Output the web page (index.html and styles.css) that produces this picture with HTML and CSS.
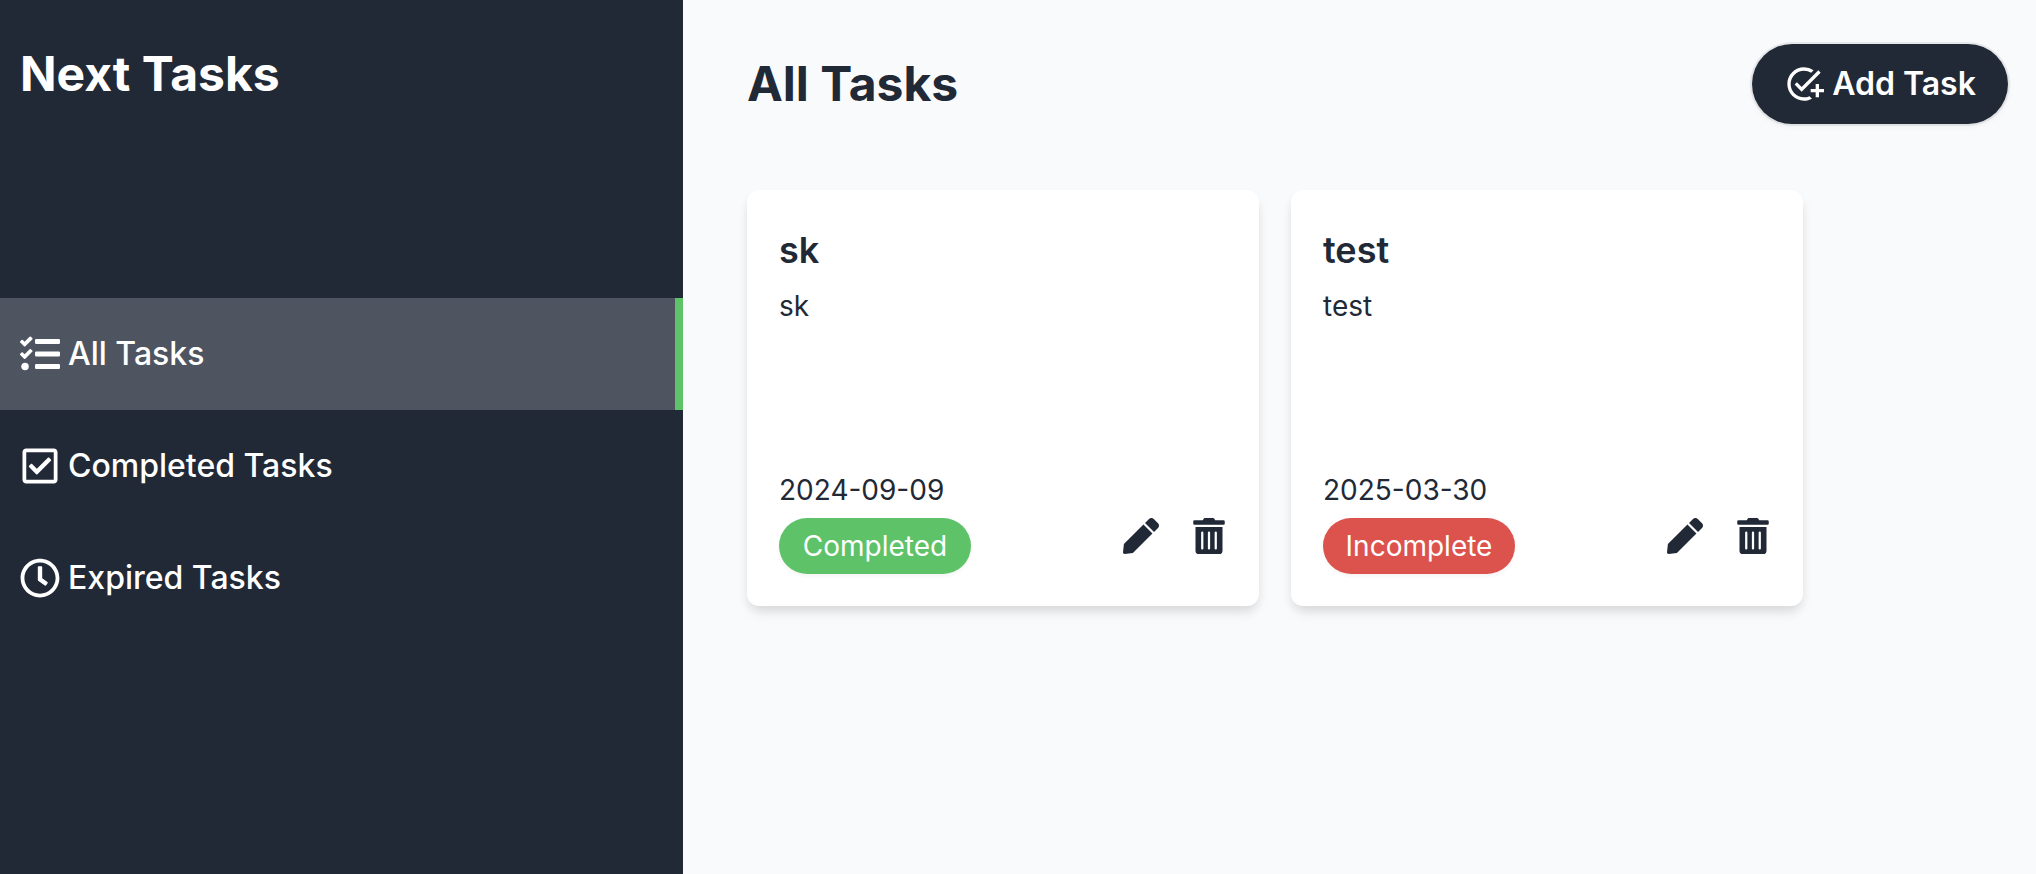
FILE: index.html
```html
<!DOCTYPE html>
<html lang="en">
<head>
<meta charset="utf-8">
<title>Next Tasks</title>
<link rel="stylesheet" href="styles.css">
</head>
<body>
<svg class="defs" aria-hidden="true">
  <symbol id="pen" viewBox="0 0 512 512"><path d="M290.74 93.24l128.02 128.02-277.99 277.99-114.14 12.6C11.35 513.54-1.56 500.62.14 485.34l12.7-114.22 277.9-277.88zm207.2-19.06l-60.11-60.11c-18.75-18.75-49.16-18.75-67.91 0l-56.55 56.55 128.02 128.02 56.55-56.55c18.75-18.76 18.75-49.16 0-67.91z"/></symbol>
  <symbol id="trash" viewBox="0 0 448 512"><path d="M32 464a48 48 0 0 0 48 48h288a48 48 0 0 0 48-48V128H32zm272-256a16 16 0 0 1 32 0v224a16 16 0 0 1-32 0zm-96 0a16 16 0 0 1 32 0v224a16 16 0 0 1-32 0zm-96 0a16 16 0 0 1 32 0v224a16 16 0 0 1-32 0zM432 32H312l-9.4-18.7A24 24 0 0 0 281.1 0H166.8a23.72 23.72 0 0 0-21.4 13.3L136 32H16A16 16 0 0 0 0 48v32a16 16 0 0 0 16 16h416a16 16 0 0 0 16-16V48a16 16 0 0 0-16-16z"/></symbol>
</svg>
<div class="app">
  <aside class="sidebar">
    <h1 class="brand">Next Tasks</h1>
    <nav class="nav">
      <a class="nav-item active">
        <svg class="nav-icon" viewBox="0 0 512 512"><path d="M139.61 35.5a12 12 0 0 0-17 0L58.93 98.81l-22.7-22.12a12 12 0 0 0-17 0L3.53 92.41a12 12 0 0 0 0 17l47.59 47.4a12.78 12.78 0 0 0 17.61 0l15.59-15.62L156.52 69a12.09 12.09 0 0 0 .09-17zm0 159.19a12 12 0 0 0-17 0l-63.68 63.72-22.7-22.1a12 12 0 0 0-17 0L3.53 252a12 12 0 0 0 0 17L51 316.5a12.77 12.77 0 0 0 17.6 0l15.7-15.69 72.2-72.22a12 12 0 0 0 .09-16.9zM64 368c-26.49 0-48.59 21.5-48.59 48S37.53 464 64 464a48 48 0 0 0 0-96zm432 16H208a16 16 0 0 0-16 16v32a16 16 0 0 0 16 16h288a16 16 0 0 0 16-16v-32a16 16 0 0 0-16-16zm0-320H208a16 16 0 0 0-16 16v32a16 16 0 0 0 16 16h288a16 16 0 0 0 16-16V80a16 16 0 0 0-16-16zm0 160H208a16 16 0 0 0-16 16v32a16 16 0 0 0 16 16h288a16 16 0 0 0 16-16v-32a16 16 0 0 0-16-16z"/></svg>
        <span>All Tasks</span>
      </a>
      <a class="nav-item">
        <svg class="nav-icon" viewBox="0 0 448 512"><path d="M400 32H48C21.49 32 0 53.49 0 80v352c0 26.51 21.49 48 48 48h352c26.51 0 48-21.49 48-48V80c0-26.51-21.49-48-48-48zm0 400H48V80h352v352zm-35.864-241.724L191.547 361.48c-4.705 4.667-12.303 4.637-16.97-.068l-90.781-91.516c-4.667-4.705-4.637-12.303.069-16.971l22.719-22.536c4.705-4.667 12.303-4.637 16.97.069l59.792 60.277 141.352-140.216c4.705-4.667 12.303-4.637 16.97.068l22.536 22.718c4.667 4.706 4.637 12.304-.068 16.971z"/></svg>
        <span>Completed Tasks</span>
      </a>
      <a class="nav-item">
        <svg class="nav-icon" viewBox="0 0 512 512"><path d="M256 8C119 8 8 119 8 256s111 248 248 248 248-111 248-248S393 8 256 8zm0 448c-110.5 0-200-89.5-200-200S145.5 56 256 56s200 89.5 200 200-89.5 200-200 200zm61.8-104.4l-84.9-61.7c-3.1-2.3-4.9-5.9-4.9-9.7V116c0-6.6 5.4-12 12-12h32c6.6 0 12 5.4 12 12v141.7l66.8 48.6c5.4 3.9 6.5 11.4 2.6 16.8L334.6 349c-3.9 5.3-11.4 6.5-16.8 2.6z"/></svg>
        <span>Expired Tasks</span>
      </a>
    </nav>
  </aside>
  <main class="main">
    <header class="header">
      <h2 class="heading">All Tasks</h2>
      <button class="add">
        <svg class="add-icon" viewBox="0 0 24 24"><path d="M22 5.18 10.59 16.6l-4.24-4.24 1.41-1.41 2.83 2.83 10-10L22 5.18zM12 20c-4.42 0-8-3.58-8-8s3.58-8 8-8c1.57 0 3.04.46 4.28 1.25l1.45-1.45A10.02 10.02 0 0 0 12 2C6.48 2 2 6.48 2 12s4.48 10 10 10c1.73 0 3.36-.44 4.78-1.22l-1.5-1.5c-1 .46-2.11.72-3.28.72zm7-5h-3v2h3v3h2v-3h3v-2h-3v-3h-2v3z"/></svg>
        <span>Add Task</span>
      </button>
    </header>
    <div class="cards">
      <article class="card">
        <div>
          <h3 class="card-title">sk</h3>
          <p class="text">sk</p>
        </div>
        <div>
          <p class="text">2024-09-09</p>
          <div class="row">
            <span class="badge done">Completed</span>
            <div class="actions">
              <svg class="pen"><use href="#pen"/></svg>
              <svg class="trash"><use href="#trash"/></svg>
            </div>
          </div>
        </div>
      </article>
      <article class="card">
        <div>
          <h3 class="card-title">test</h3>
          <p class="text">test</p>
        </div>
        <div>
          <p class="text">2025-03-30</p>
          <div class="row">
            <span class="badge todo">Incomplete</span>
            <div class="actions">
              <svg class="pen"><use href="#pen"/></svg>
              <svg class="trash"><use href="#trash"/></svg>
            </div>
          </div>
        </div>
      </article>
    </div>
  </main>
</div>
</body>
</html>
```
FILE: styles.css
```css
* { box-sizing: border-box; margin: 0; padding: 0; }
body { font-family: Inter, sans-serif; color: #222936; background: #f9fafc; }
svg { display: block; fill: currentColor; flex: none; }
.defs { display: none; }

.app { display: flex; height: 874px; overflow: hidden; }

.sidebar { width: 683px; background: #222936; color: #fff; }
.brand { height: 298px; padding: 42px 20px 0; font-size: 48px; line-height: 64px; font-weight: 700; }
.nav-item {
  display: flex; align-items: center; gap: 8px;
  height: 112px; padding-left: 20px;
  font-size: 32px; line-height: 48px; font-weight: 500;
}
.nav-item.active { background: #4e5561; border-right: 8px solid #5ec269; }
.nav-icon { width: 40px; height: 40px; }

.main { flex: 1; padding: 44px 28px 0 64px; }
.header { display: flex; align-items: center; justify-content: space-between; height: 80px; }
.heading { font-size: 48px; line-height: 64px; font-weight: 700; }
.add {
  display: flex; align-items: center; justify-content: center; gap: 8px;
  width: 256px; height: 80px; border: 0; border-radius: 40px;
  background: #222936; color: #fff;
  font: 600 32px/48px Inter, sans-serif;
  box-shadow: 0 0 0 2px rgba(34, 41, 54, .08), 0 2px 6px rgba(0, 0, 0, .06);
}
.add-icon { width: 40px; height: 40px; }

.cards { display: flex; gap: 32px; margin-top: 66px; }
.card {
  display: flex; flex-direction: column; justify-content: space-between;
  width: 512px; height: 416px; padding: 32px; border-radius: 12px;
  background: #fff;
  box-shadow: 0 8px 12px -2px rgba(0, 0, 0, .1), 0 4px 12px -2px rgba(0, 0, 0, .06);
}
.card-title { font-size: 36px; line-height: 56px; font-weight: 600; }
.text { font-size: 28px; line-height: 56px; }
.row { display: flex; justify-content: space-between; }
.badge {
  width: 192px; height: 56px; border-radius: 28px;
  color: #fff; font-size: 28px; line-height: 56px; text-align: center;
  box-shadow: 0 2px 4px rgba(0, 0, 0, .05);
}
.done { background: #5ec269; }
.todo { background: #dc524c; }
.actions { display: flex; gap: 34px; }
.pen { width: 36px; height: 36px; }
.trash { width: 32px; height: 36px; margin-right: 2px; }
```
